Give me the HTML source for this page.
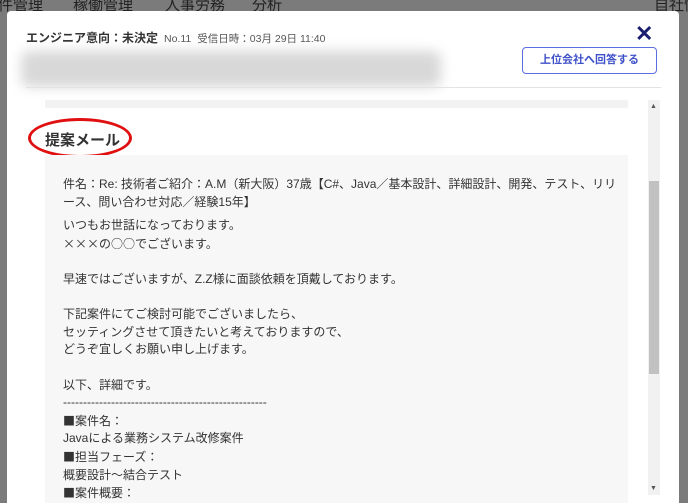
<!DOCTYPE html>
<html><head><meta charset="utf-8"><style>
*{margin:0;padding:0;box-sizing:border-box}
html,body{width:688px;height:503px;overflow:hidden}
body{background:#7b7b7b;font-family:"Liberation Sans","Noto Sans CJK JP",sans-serif;position:relative}
.nav{position:absolute;top:-6px;left:0;font-size:15px;color:#222;white-space:nowrap}
.nav span{position:absolute;top:0}
.modal{position:absolute;left:7px;top:11px;width:672px;height:500px;background:#fff;border-radius:4px}
.h{position:absolute;left:19px;top:18px;font-size:12px;color:#333;font-weight:bold}
.h small{font-weight:normal;font-size:10.5px;color:#555;margin-left:6px}
.blur{position:absolute;left:14px;top:40px;width:420px;height:36px;background:#d8d8d8;filter:blur(6px);border-radius:8px}
.x{position:absolute;left:628px;top:10px;font-size:22px;font-weight:bold;color:#1a1e6e}
.btn{position:absolute;left:515px;top:36px;width:135px;height:27px;border:1px solid #5b6ee0;border-radius:4px;color:#3f51c8;font-size:11px;text-align:center;line-height:25px;font-weight:bold}
.hr{position:absolute;left:19px;top:76px;width:635px;height:1px;background:#e3e3e3}
.top{position:absolute;left:38px;top:89px;width:583px;height:8px;background:#f2f2f3;border-radius:2px}
.title{position:absolute;left:38px;top:118px;font-size:15px;font-weight:bold;color:#333}
.ell{position:absolute;left:21px;top:107px;width:104px;height:40px;border:3px solid #e01010;border-radius:50%}
.box{position:absolute;left:38px;top:144px;width:583px;height:360px;background:#f7f7f7}
.txt{position:absolute;left:56px;top:165px;font-size:12px;color:#333;line-height:17.6px;width:560px}
.c{font-family:"Noto Sans CJK JP",sans-serif}
.sb{position:absolute;left:641px;top:89px;width:12px;height:395px;background:#f1f1f1}
.th{position:absolute;left:642px;top:170px;width:10px;height:193px;background:#c1c1c1}
</style></head><body>
<div class="nav"><span style="left:-2px">件管理</span><span style="left:73px">稼働管理</span><span style="left:165px">人事労務</span><span style="left:252px">分析</span><span style="left:654px">自社情</span></div>
<div class="modal">
<div class="h">エンジニア意向：未決定<small>No.11</small><small>受信日時：03月 29日 11:40</small></div>
<div class="blur"></div>
<div class="x">✕</div>
<div class="btn">上位会社へ回答する</div>
<div class="hr"></div>
<div class="top"></div>
<div class="ell"></div>
<div class="title">提案メール</div>
<div class="box"></div>
<div class="txt">件名：Re: 技術者ご紹介：A.M（新大阪）37歳【C#、Java／基本設計、詳細設計、開発、テスト、リリース、問い合わせ対応／経験15年】<div style="height:6px"></div>いつもお世話になっております。<br><span class="c">×××の○○</span>でございます。<br><br>早速ではございますが、Z.Z様に面談依頼を頂戴しております。<br><br>下記案件にてご検討可能でございましたら、<br>セッティングさせて頂きたいと考えておりますので、<br>どうぞ宜しくお願い申し上げます。<br><br>以下、詳細です。<br>---------------------------------------------------<br><span class="c">■</span>案件名：<br>Javaによる業務システム改修案件<br><span class="c">■</span>担当フェーズ：<br>概要設計～結合テスト<br><span class="c">■</span>案件概要：</div>
<div class="sb"></div><div class="th"></div>
<div style="position:absolute;left:643px;top:92px;font-size:7px;color:#555">▲</div>
<div style="position:absolute;left:643px;top:474px;font-size:7px;color:#555">▼</div>
</div>
</body></html>
